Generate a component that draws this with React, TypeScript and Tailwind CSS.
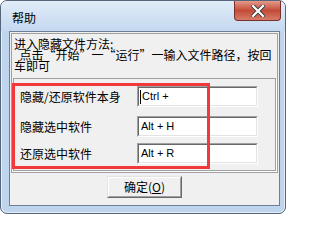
import React from "react";

const cjk = { fontFamily: '"Noto Sans CJK SC", "Noto Sans", sans-serif' };
const latin = { fontFamily: '"Liberation Sans", Arial, sans-serif' };

function KeyBox({ value, caret }: { value: string; caret?: boolean }) {
  return (
    <div className="w-[121px] h-[21px] border border-t-[#a0a0a0] border-l-[#a0a0a0] border-b-white border-r-white">
      <div className="h-full border border-t-[#696969] border-l-[#696969] border-b-[#e3e3e3] border-r-[#e3e3e3] bg-white flex items-center pl-[1px]">
        {caret && <span className="w-[1px] h-[14px] bg-black" />}
        <span className="text-[11px] leading-none text-black pl-[1px]" style={latin}>
          {value}
        </span>
      </div>
    </div>
  );
}

function Row({ label, value, caret, className }: { label: string; value: string; caret?: boolean; className?: string }) {
  return (
    <div className={"flex items-center " + (className ?? "")}>
      <div className="w-[117px] text-[12px] leading-none text-black whitespace-nowrap" style={cjk}>
        {label}
      </div>
      <KeyBox value={value} caret={caret} />
    </div>
  );
}

export default function App() {
  return (
    <div className="relative w-[291px] h-[218px] bg-white overflow-hidden">
      {/* window frame */}
      <div className="w-[286px] h-[214px] rounded-[7px] border border-[#55657a] bg-[#bfd4ed] shadow-[inset_0_0_0_1px_#e6eef8] flex flex-col">
        {/* title bar */}
        <div className="h-[30px] flex items-start justify-between rounded-t-[6px] bg-gradient-to-b from-[#e1ecf8] to-[#c4d8ef]">
          <span className="pl-[11px] pt-[11px] text-[12px] leading-none text-black" style={cjk}>
            帮助
          </span>
          <div className="mr-[4px] w-[47px] h-[20px] rounded-b-[4px] border border-t-0 border-[#7a2f2a] bg-gradient-to-b from-[#e39a8c] via-[#c44a38] to-[#d67c6a] flex items-center justify-center">
            <svg width="14" height="12" viewBox="0 0 14 12">
              <path d="M2 1 L12 11 M12 1 L2 11" stroke="#3b3b3b" strokeWidth="4" strokeLinecap="square" />
              <path d="M2 1 L12 11 M12 1 L2 11" stroke="#ffffff" strokeWidth="2.2" strokeLinecap="square" />
            </svg>
          </div>
        </div>
        {/* client area */}
        <div className="ml-[8px] mr-[5px] h-[175px] border border-[#6e7f95] bg-[#f0f0f0] flex flex-col">
          <div className="mx-[1px] mt-[1px] border border-[#a0a0a0] pt-[4px] pb-[1px] overflow-hidden">
            <div className="pl-[2px] text-[12px] leading-[11px] text-black whitespace-nowrap" style={cjk}>
              <div>进入隐藏文件方法:</div>
              <div>&nbsp;&nbsp;点击“开始”一“运行”一输入文件路径，按回</div>
              <div>车即可</div>
            </div>
            <div className="mx-[1px] mt-[7px] border border-[#a0a0a0] shadow-[1px_1px_0_#ffffff] pl-[6px] pt-[7px] pb-[6px]">
              <Row label="隐藏/还原软件本身" value="Ctrl +" caret />
              <Row label="隐藏选中软件" value="Alt + H" className="mt-[9px]" />
              <Row label="还原选中软件" value="Alt + R" className="mt-[6px]" />
            </div>
          </div>
          <div className="mt-[3px] flex justify-center">
            <button className="w-[75px] h-[22px] border border-t-[#e3e3e3] border-l-[#e3e3e3] border-b-[#696969] border-r-[#696969] bg-[#f0f0f0]">
              <div className="h-full border border-t-white border-l-white border-b-[#a0a0a0] border-r-[#a0a0a0] flex items-center justify-center text-[12px] leading-none text-black" style={cjk}>
                确定(<span className="underline">O</span>)
              </div>
            </button>
          </div>
        </div>
      </div>
      {/* red highlight annotation */}
      <div className="absolute left-[12px] top-[83px] w-[198px] h-[86px] border-[3px] border-[#f2383a]" />
    </div>
  );
}
